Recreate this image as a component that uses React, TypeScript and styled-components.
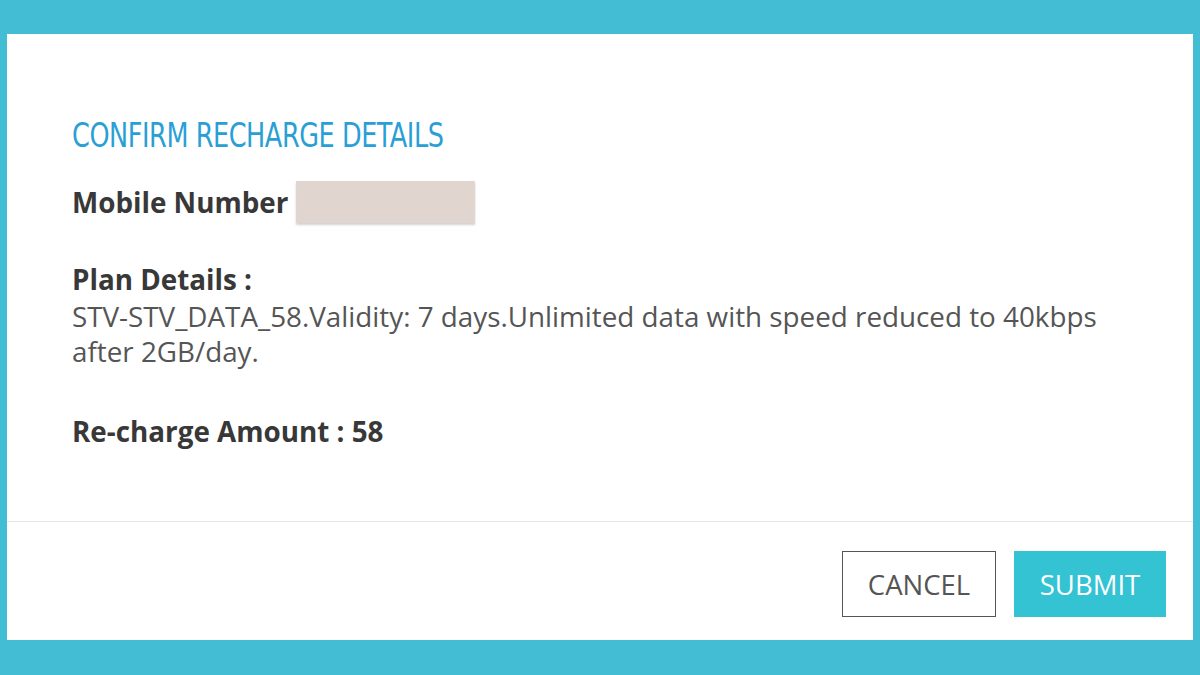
import * as React from "react";
import styled, { createGlobalStyle } from "styled-components";

const GlobalStyle = createGlobalStyle`
  html, body {
    margin: 0;
    padding: 0;
    background: #42bdd4;
  }
  * {
    box-sizing: border-box;
  }
`;

const Page = styled.div`
  width: 1200px;
  height: 675px;
  padding: 34px 7px 35px 7px;
  background: #42bdd4;
`;

const Modal = styled.div`
  height: 100%;
  background: #ffffff;
  display: flex;
  flex-direction: column;
`;

const Body = styled.div`
  flex: 1;
  padding: 82px 64px 0 65px;
  font-family: "Open Sans", "Liberation Sans", sans-serif;
  font-size: 27.8px;
  color: #555555;
`;

const Title = styled.h2`
  margin: 0 0 24px 0;
  font-family: "Liberation Sans Narrow", "DejaVu Sans Condensed", sans-serif;
  font-weight: 400;
  font-size: 33px;
  line-height: 40px;
  color: #2a9fd6;
  letter-spacing: -0.5px;
  white-space: nowrap;
  transform: scaleX(0.86);
  transform-origin: left center;
`;

const Row = styled.div`
  display: flex;
  align-items: center;
  gap: 8px;
  min-height: 44px;
`;

const Label = styled.span`
  font-weight: 700;
  color: #383838;
  line-height: 35px;
`;

const Redacted = styled.span`
  display: inline-block;
  width: 179px;
  height: 42px;
  background: #e0d5cf;
  box-shadow: 0 2px 2px rgba(0, 0, 0, 0.18);
`;

const Section = styled.div<{ $gap: number }>`
  margin-top: ${(p) => p.$gap}px;
  line-height: 35px;
`;

const Description = styled.div`
  margin-top: 2px;
`;

const Footer = styled.div`
  border-top: 1px solid #e6e6e6;
  display: flex;
  justify-content: flex-end;
  gap: 18px;
  padding: 29px 27px 23px 0;
`;

const Button = styled.button<{ $primary?: boolean }>`
  height: 66px;
  width: ${(p) => (p.$primary ? 152 : 154)}px;
  font-family: "Open Sans", "Liberation Sans", sans-serif;
  font-size: 27.5px;
  font-weight: ${(p) => (p.$primary ? 500 : 400)};
  cursor: pointer;
  border: ${(p) => (p.$primary ? "none" : "1px solid #555555")};
  background: ${(p) => (p.$primary ? "#33c3d3" : "#ffffff")};
  color: ${(p) => (p.$primary ? "#ffffff" : "#555555")};
`;

export default function App() {
  return (
    <>
      <GlobalStyle />
      <Page>
        <Modal>
          <Body>
            <Title>CONFIRM RECHARGE DETAILS</Title>
            <Row>
              <Label>Mobile Number</Label>
              <Redacted />
            </Row>
            <Section $gap={38}>
              <Label>Plan Details :</Label>
              <Description>
                STV-STV_DATA_58.Validity: 7 days.Unlimited data with speed
                reduced to 40kbps after 2GB/day.
              </Description>
            </Section>
            <Section $gap={45}>
              <Label>Re-charge Amount : 58</Label>
            </Section>
          </Body>
          <Footer>
            <Button>CANCEL</Button>
            <Button $primary>SUBMIT</Button>
          </Footer>
        </Modal>
      </Page>
    </>
  );
}
